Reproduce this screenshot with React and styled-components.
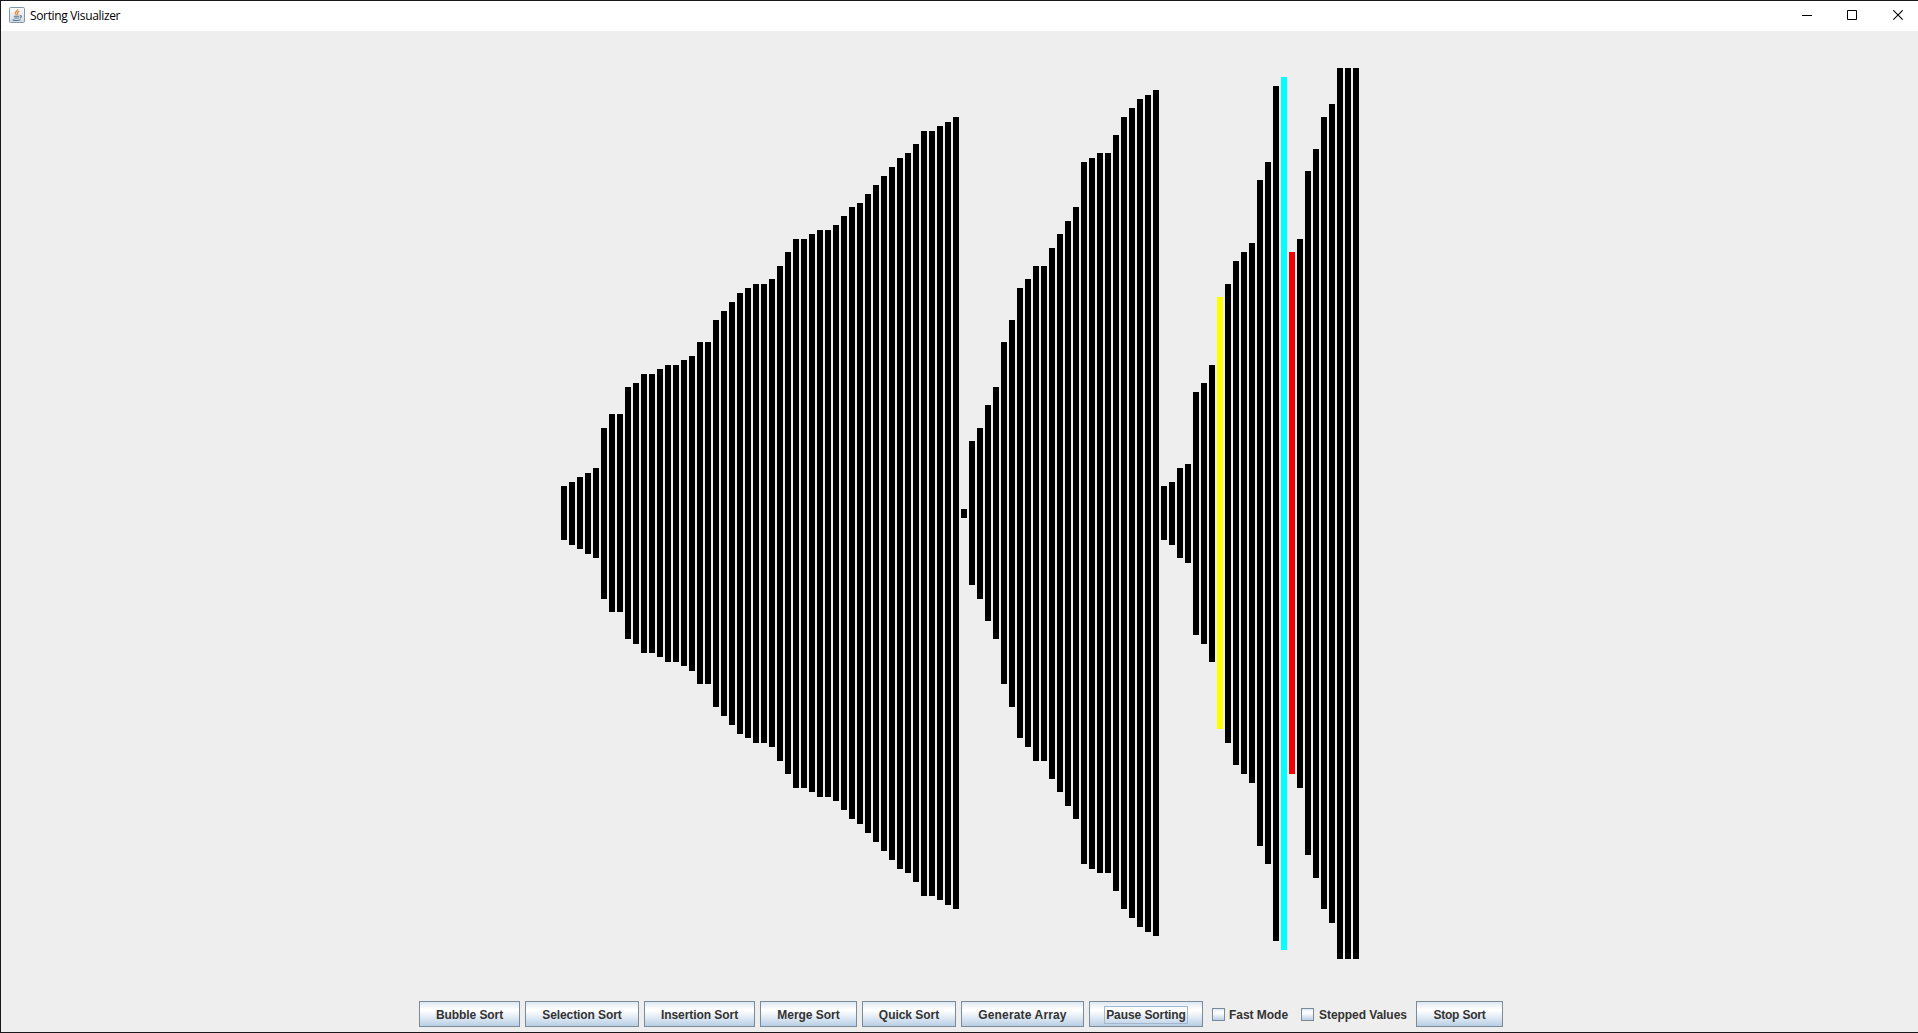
import React from 'react';
import styled, { createGlobalStyle } from 'styled-components';

const GlobalStyle = createGlobalStyle`
  body { margin: 0; background: #eee; overflow: hidden; }
  * { box-sizing: border-box; }
`;

const Window = styled.div`
  display: flex;
  flex-direction: column;
  width: 1918px;
  height: 1033px;
  background: #eee;
  border: solid #19171a;
  border-width: 1px 0 1px 1px;
`;

const TitleBar = styled.header`
  display: flex;
  align-items: flex-start;
  flex: 0 0 30px;
  padding: 6px 14px 0 8px;
  background: #fff;
`;

const Title = styled.h1`
  flex: 1;
  margin: 1px 0 0 5px;
  font: 400 12px/16px 'Open Sans', 'Noto Sans', sans-serif;
  letter-spacing: -0.34px;
  color: #000;
`;

const WindowControls = styled.div`
  display: flex;
  gap: 35px;
  padding-top: 3px;
  svg { display: block; }
`;

const Canvas = styled.main`
  display: flex;
  align-items: center;
  gap: 2px;
  flex: 0 0 964px;
  padding-left: 560px;
`;

const Bar = styled.div`
  flex: 0 0 6px;
  height: ${({ $value }) => $value * 9}px;
  background: ${({ $color }) => $color || '#000'};
`;

const Toolbar = styled.footer`
  display: flex;
  align-items: center;
  gap: 5px;
  padding: 6px 0 0 418px;
`;

const Button = styled.button`
  display: flex;
  align-items: center;
  justify-content: center;
  width: ${({ $width }) => $width}px;
  height: 26px;
  padding: 1px 0 0;
  border: 1px solid #7a8a99;
  border-radius: 0;
  background: linear-gradient(#dde8f3 0%, #fff 30%, #fff 36%, #b8cfe5 100%);
  color: #333;
  font: 700 12px/14px 'Liberation Sans', Arial, sans-serif;
  white-space: nowrap;
`;

const Label = styled.span`
  padding: 1px;
  letter-spacing: ${({ $spacing = 0 }) => $spacing}px;
  outline: ${({ $focused }) => ($focused ? '1px solid #a3b8cc' : 'none')};
`;

const Option = styled.label`
  display: flex;
  align-items: center;
  gap: ${({ $gap }) => $gap}px;
  width: ${({ $width }) => $width}px;
  height: 26px;
  padding: 1px 0 0 4px;
  color: #333;
  font: 700 12px/14px 'Liberation Sans', Arial, sans-serif;
  white-space: nowrap;
`;

const Box = styled.input`
  appearance: none;
  flex: 0 0 13px;
  height: 13px;
  margin: 0;
  border: 1px solid #7a8a99;
  background: linear-gradient(#dde8f3 0%, #fff 30%, #fff 36%, #b8cfe5 100%);
`;

const VALUES = [
  6, 7, 8, 9, 10, 19, 22, 22, 28, 29, 31, 31, 32, 33, 33, 34, 35, 38, 38, 43,
  45, 47, 49, 50, 51, 51, 52, 55, 58, 61, 61, 62, 63, 63, 64, 66, 68, 69, 71, 73,
  75, 77, 79, 80, 82, 85, 85, 86, 87, 88, 1, 16, 19, 24, 28, 38, 43, 50, 52, 55,
  55, 59, 62, 65, 68, 78, 79, 80, 80, 84, 88, 90, 92, 93, 94, 6, 7, 10, 11, 27,
  29, 33, 48, 51, 56, 58, 60, 74, 78, 95, 97, 58, 61, 76, 81, 88, 91, 99, 99, 99,
];

const HIGHLIGHTS = { 82: '#ffff00', 90: '#00ffff', 91: '#f00000' };

const ACTIONS = [
  { name: 'Bubble Sort', width: 101, spacing: -0.08 },
  { name: 'Selection Sort', width: 114, spacing: -0.08 },
  { name: 'Insertion Sort', width: 111, spacing: -0.06 },
  { name: 'Merge Sort', width: 97, spacing: -0.04 },
  { name: 'Quick Sort', width: 94, spacing: -0.04 },
  { name: 'Generate Array', width: 123, spacing: 0.15 },
  { name: 'Pause Sorting', width: 114, spacing: -0.08, focused: true },
];

const JavaIcon = () => (
  <svg width="16" height="16" viewBox="0 0 16 16" fill="none">
    <defs>
      <linearGradient id="tile" x1="0" y1="0" x2="0" y2="1">
        <stop offset="0" stopColor="#fdfdfd" />
        <stop offset="1" stopColor="#d3dbe2" />
      </linearGradient>
    </defs>
    <rect x=".5" y=".5" width="15" height="15" rx="1.2" fill="url(#tile)" stroke="#8397a7" />
    <path d="M8.7 2.2c.5 1.7-3.3 2.6-2.3 4.3.4.7 1 1 1.1 1.7M10.4 4.1C8.4 5 8 5.6 8.6 6.5c.3.6.2 1-.3 1.5" stroke="#e58a3c" strokeWidth="1.3" />
    <path d="M4.8 9.3h5.4M5.3 11h4.5M3.6 12.9c2.5.7 6 .6 8-.2M10.7 8.8c2.4-.5 2.1 1.7.1 2.1" stroke="#55768f" strokeWidth="1.1" />
  </svg>
);

export default function App() {
  return (
    <>
      <GlobalStyle />
      <Window>
        <TitleBar>
          <JavaIcon />
          <Title>Sorting Visualizer</Title>
          <WindowControls>
            <svg width="11" height="11" stroke="#000"><path d="M1 5.5h10" /></svg>
            <svg width="11" height="11" stroke="#000" fill="none"><path d="M.5.5h9v9h-9z" /></svg>
            <svg width="11" height="11" stroke="#000" fill="none"><path d="M.3.3l9.4 9.4M9.7.3L.3 9.7" strokeWidth="1.1" /></svg>
          </WindowControls>
        </TitleBar>
        <Canvas>
          {VALUES.map((value, i) => (
            <Bar key={i} $value={value} $color={HIGHLIGHTS[i]} />
          ))}
        </Canvas>
        <Toolbar>
          {ACTIONS.map(({ name, width, spacing, focused }) => (
            <Button key={name} $width={width}>
              <Label $spacing={spacing} $focused={focused}>{name}</Label>
            </Button>
          ))}
          <Option $width={84} $gap={3}>
            <Box type="checkbox" />
            <Label $spacing={-0.03}>Fast Mode</Label>
          </Option>
          <Option $width={114} $gap={4}>
            <Box type="checkbox" />
            <Label $spacing={-0.06}>Stepped Values</Label>
          </Option>
          <Button $width={87}>
            <Label $spacing={-0.2}>Stop Sort</Label>
          </Button>
        </Toolbar>
      </Window>
    </>
  );
}
